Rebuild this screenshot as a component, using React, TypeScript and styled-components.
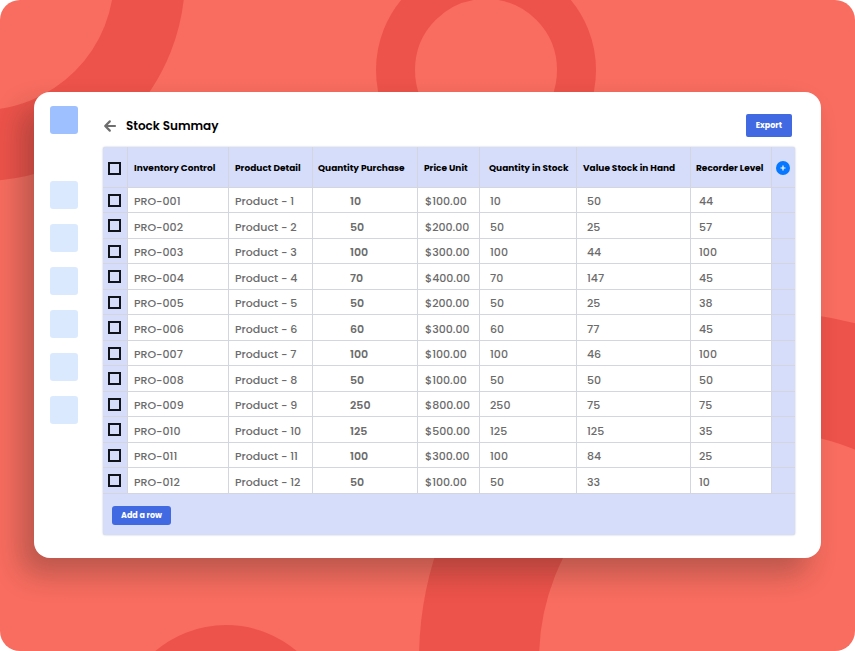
import React from "react";
import styled, { createGlobalStyle } from "styled-components";

const GlobalStyle = createGlobalStyle`
  *, *::before, *::after { box-sizing: border-box; }
  body {
    margin: 0;
    background: #ffffff;
    font-family: Poppins, Inter, "Open Sans", sans-serif;
  }
  button { font-family: inherit; }
`;

const Frame = styled.div`
  position: relative;
  min-height: 100vh;
  padding: 92px 34px;
  border-radius: 20px;
  overflow: hidden;
  background: #f86d5f;
`;

const Backdrop = styled.svg`
  position: absolute;
  top: 0;
  left: 0;
  width: 100%;
  height: 100%;
`;

const Card = styled.div`
  position: relative;
  display: flex;
  gap: 25px;
  padding: 14px 26px 23px 16px;
  border-radius: 16px;
  background: #ffffff;
  box-shadow: -13px 16px 28px rgba(30, 30, 30, 0.28);
`;

const Sidebar = styled.nav`
  flex: none;
  display: flex;
  flex-direction: column;
  gap: 15px;
`;

const NavButton = styled.button<{ $active?: boolean }>`
  width: 28px;
  height: 28px;
  padding: 0;
  border: 0;
  border-radius: 3px;
  margin-bottom: ${(p) => (p.$active ? "32px" : "0")};
  background: ${(p) => (p.$active ? "#9fc0ff" : "#dbe9ff")};
`;

const Main = styled.main`
  flex: 1;
  min-width: 0;
  padding-top: 8px;
`;

const Header = styled.header`
  display: flex;
  align-items: center;
  gap: 9px;
  margin-bottom: 10px;
  padding-right: 3px;
`;

const BackButton = styled.button`
  display: flex;
  padding: 0;
  border: 0;
  background: none;
  color: #6e6e6e;
`;

const Title = styled.h1`
  flex: 1;
  margin: 0;
  padding-top: 1px;
  font-size: 12px;
  line-height: 20px;
  font-weight: 600;
  color: #000000;
`;

const ActionButton = styled.button<{ $size: "medium" | "small" }>`
  height: ${(p) => (p.$size === "medium" ? "23px" : "19px")};
  padding: ${(p) => (p.$size === "medium" ? "1px 10px 0" : "1px 9px 0")};
  border: 0;
  border-radius: ${(p) => (p.$size === "medium" ? "2px" : "3px")};
  background: #4169e1;
  color: #ffffff;
  font-size: 8px;
  font-weight: 700;
  white-space: nowrap;
`;

const Panel = styled.div`
  border-radius: 2px;
  background: #d5ddfa;
  box-shadow: 0 0 2px rgba(0, 0, 0, 0.25);
`;

const Table = styled.table`
  width: 100%;
  table-layout: fixed;
  border-collapse: separate;
  border-spacing: 0;
`;

const Col = styled.col<{ $width: number }>`
  width: ${(p) => p.$width}px;
`;

const HeadCell = styled.th<{ $inset?: number }>`
  height: 41px;
  padding: 2px 0 0 ${(p) => p.$inset ?? 0}px;
  border-right: 1px solid #d3d5e0;
  border-bottom: 1px solid #d3d5e0;
  color: #000000;
  font-size: 9px;
  line-height: 12px;
  font-weight: 700;
  text-align: left;
  white-space: nowrap;
  &:last-child { border-right: 0; }
`;

const Cell = styled.td<{ $inset?: number; $strong?: boolean }>`
  padding: 2px 0 0 ${(p) => p.$inset ?? 0}px;
  border-right: 1px solid #d3d5e0;
  border-bottom: 1px solid #d3d5e0;
  background: #ffffff;
  color: #6b6b6b;
  font-size: 11px;
  line-height: 14px;
  font-weight: ${(p) => (p.$strong ? 600 : 500)};
  white-space: nowrap;
`;

const EdgeCell = styled.td`
  padding: 0;
  border-right: 1px solid #d3d5e0;
  border-bottom: 1px solid #d3d5e0;
  &:last-child { border-right: 0; }
`;

const Row = styled.tr`
  height: 26px;
  &:nth-child(odd) { height: 25px; }
`;

const Center = styled.div`
  display: flex;
  justify-content: center;
  padding-right: 2px;
`;

const Checkbox = styled.input`
  appearance: none;
  width: 13px;
  height: 13px;
  margin: 0;
  border: 2px solid #101319;
  &:checked { background: #4169e1; }
`;

const AddColumn = styled.button`
  display: flex;
  align-items: center;
  justify-content: center;
  width: 14px;
  height: 14px;
  padding: 0;
  border: 0;
  border-radius: 50%;
  background: #0677ff;
`;

const Footer = styled.footer`
  display: flex;
  align-items: center;
  height: 41px;
  padding: 2px 9px 0;
`;

const columns = [
  { label: "Inventory Control", width: 101, head: 6, body: 6 },
  { label: "Product Detail", width: 84, head: 6, body: 6 },
  { label: "Quantity Purchase", width: 105, head: 5, body: 37, strong: true },
  { label: "Price Unit", width: 62, head: 6, body: 7 },
  { label: "Quantity in Stock", width: 97, head: 9, body: 10 },
  { label: "Value Stock in Hand", width: 114, head: 6, body: 10 },
  { label: "Recorder Level", width: 81, head: 5, body: 8 },
];

const rows = [
  ["10", "$100.00", "10", "50", "44"],
  ["50", "$200.00", "50", "25", "57"],
  ["100", "$300.00", "100", "44", "100"],
  ["70", "$400.00", "70", "147", "45"],
  ["50", "$200.00", "50", "25", "38"],
  ["60", "$300.00", "60", "77", "45"],
  ["100", "$100.00", "100", "46", "100"],
  ["50", "$100.00", "50", "50", "50"],
  ["250", "$800.00", "250", "75", "75"],
  ["125", "$500.00", "125", "125", "35"],
  ["100", "$300.00", "100", "84", "25"],
  ["50", "$100.00", "50", "33", "10"],
].map((values, i) => [
  `PRO-${String(i + 1).padStart(3, "0")}`,
  `Product - ${i + 1}`,
  ...values,
]);

const navItems = ["Home", "Inventory", "Orders", "Suppliers", "Customers", "Reports", "Settings"];

export default function App() {
  return (
    <>
      <GlobalStyle />
      <Frame>
        <Backdrop
          viewBox="0 0 855 651"
          preserveAspectRatio="xMidYMid slice"
          fill="none"
          stroke="#ed534a"
          aria-hidden="true"
        >
          <circle cx="-19" cy="-23" r="168.5" strokeWidth="71" />
          <circle cx="486" cy="70" r="90.5" strokeWidth="39" />
          <circle cx="226" cy="734" r="90" strokeWidth="38" />
          <circle cx="767" cy="660" r="288" strokeWidth="120" />
        </Backdrop>
        <Card>
          <Sidebar aria-label="Sections">
            {navItems.map((name, i) => (
              <NavButton key={name} aria-label={name} $active={i === 0} />
            ))}
          </Sidebar>
          <Main>
            <Header>
              <BackButton aria-label="Back">
                <svg width="14" height="14" viewBox="0 0 14 14" fill="none" stroke="currentColor" strokeWidth="2.2" strokeLinecap="round" strokeLinejoin="round">
                  <path d="M12 7H2.6M6.8 2.4L2.2 7l4.6 4.6" />
                </svg>
              </BackButton>
              <Title>Stock Summay</Title>
              <ActionButton $size="medium">Export</ActionButton>
            </Header>
            <Panel>
              <Table>
                <colgroup>
                  <Col $width={25} />
                  {columns.map((c) => (
                    <Col key={c.label} $width={c.width} />
                  ))}
                  <Col $width={23} />
                </colgroup>
                <thead>
                  <tr>
                    <HeadCell>
                      <Center>
                        <Checkbox type="checkbox" aria-label="Select all rows" />
                      </Center>
                    </HeadCell>
                    {columns.map((c) => (
                      <HeadCell key={c.label} $inset={c.head}>
                        {c.label}
                      </HeadCell>
                    ))}
                    <HeadCell>
                      <Center>
                        <AddColumn aria-label="Add column">
                          <svg width="6" height="6" viewBox="0 0 6 6" stroke="#ffffff" strokeWidth="1.2">
                            <path d="M3 0.5v5M0.5 3h5" />
                          </svg>
                        </AddColumn>
                      </Center>
                    </HeadCell>
                  </tr>
                </thead>
                <tbody>
                  {rows.map((row) => (
                    <Row key={row[0]}>
                      <EdgeCell>
                        <Center>
                          <Checkbox type="checkbox" aria-label={`Select ${row[0]}`} />
                        </Center>
                      </EdgeCell>
                      {row.map((value, i) => (
                        <Cell
                          key={columns[i].label}
                          $inset={columns[i].body}
                          $strong={columns[i].strong}
                        >
                          {value}
                        </Cell>
                      ))}
                      <EdgeCell />
                    </Row>
                  ))}
                </tbody>
              </Table>
              <Footer>
                <ActionButton $size="small">Add a row</ActionButton>
              </Footer>
            </Panel>
          </Main>
        </Card>
      </Frame>
    </>
  );
}
